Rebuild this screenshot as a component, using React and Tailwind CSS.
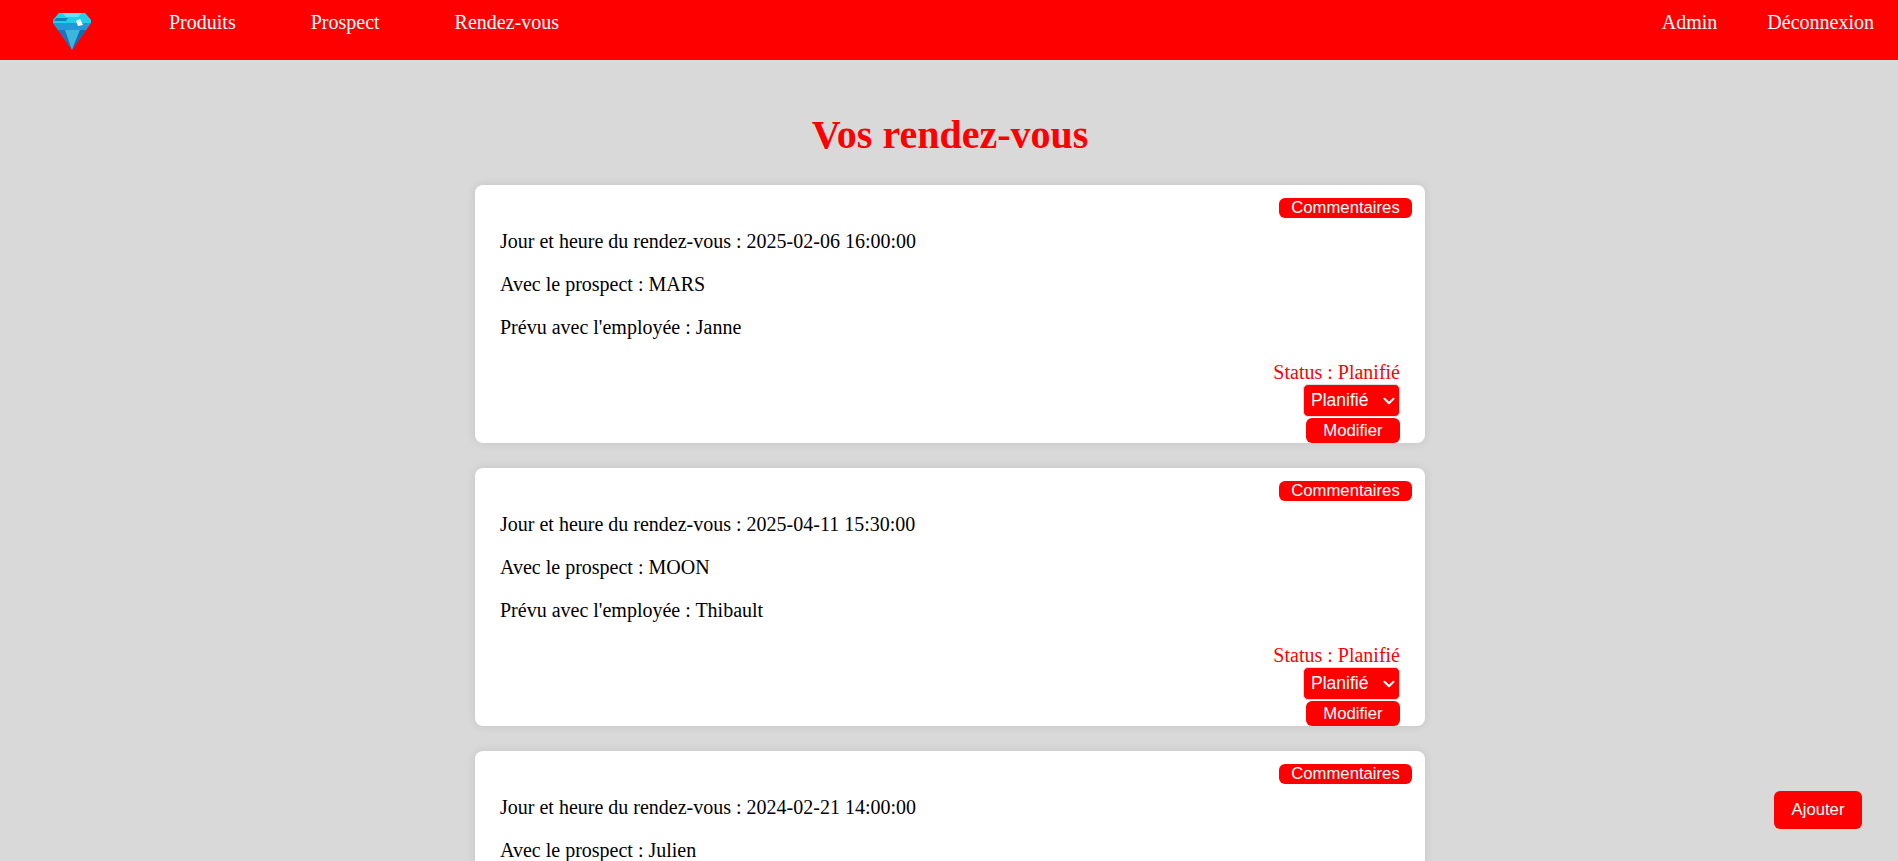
import { ChevronDown } from 'lucide-react'

const rendezVous = [
  { date: '2025-02-06 16:00:00', prospect: 'MARS', employee: 'Janne' },
  { date: '2025-04-11 15:30:00', prospect: 'MOON', employee: 'Thibault' },
  { date: '2024-02-21 14:00:00', prospect: 'Julien', employee: 'Janne' },
]

function Diamond() {
  return (
    <svg width="38" height="38" viewBox="0 0 38 38" className="block">
      <polygon points="6,0 32,0 38,7 38,10 19,37 0,10 0,7" fill="#1f86c8" />
      <polygon points="6,0 32,0 38,7 38,10 0,10 0,7" fill="#22cfe9" />
      <polygon points="3,5 15,5 13,8 1,8" fill="#1a7fb8" />
      <polygon points="9,0 29,0 25,4 13,4" fill="#5fe6f2" />
      <polygon points="0,10 38,10 33,17 5,17" fill="#2298d8" />
      <polygon points="23,8 27,6 30,12 25,13" fill="#ffffff" />
      <polygon points="5,17 12,17 19,37" fill="#2270bb" />
      <polygon points="12,17 27,17 19,37" fill="#3db6dc" />
      <polygon points="27,17 33,17 19,37" fill="#1968b2" />
    </svg>
  )
}

function Header() {
  return (
    <header className="h-[60px] bg-[#ff0000] flex items-start pl-[53px] pr-[24px] text-white text-[20px] leading-[23px]">
      <div className="pt-[13px]">
        <Diamond />
      </div>
      <nav className="flex gap-[75px] ml-[78px] pt-[11px]">
        <a href="#">Produits</a>
        <a href="#">Prospect</a>
        <a href="#">Rendez-vous</a>
      </nav>
      <nav className="flex gap-[50px] ml-auto pt-[11px]">
        <a href="#">Admin</a>
        <a href="#">Déconnexion</a>
      </nav>
    </header>
  )
}

function Card({ item }) {
  return (
    <div className="bg-white rounded-lg shadow-[0_0_10px_rgba(0,0,0,0.1)] h-[258px] shrink-0 flex flex-col">
      <div className="flex justify-end pt-[13px] pr-[13px]">
        <button className="w-[133px] h-[20px] bg-[#ff0000] text-white rounded-md text-[16.7px] leading-[20px] font-['Liberation_Sans',Arial,sans-serif]">
          Commentaires
        </button>
      </div>
      <div className="flex flex-col gap-[20px] mt-[12px] pl-[25px] text-[20px] leading-[23px] text-black">
        <p>Jour et heure du rendez-vous : {item.date}</p>
        <p>Avec le prospect : {item.prospect}</p>
        <p>Prévu avec l'employée : {item.employee}</p>
      </div>
      <div className="flex flex-col items-end mt-[22px] pr-[25px]">
        <p className="text-[20px] leading-[23px] text-[#ff0000]">Status : Planifié</p>
        <div className="relative w-[97px] h-[33px]">
          <select className="appearance-none w-full h-full pl-[7px] bg-[#ff0000] text-white rounded-[5px] border border-[#dddddd] text-[17.5px] font-['Liberation_Sans',Arial,sans-serif]" defaultValue="Planifié">
            <option>Planifié</option>
            <option>Terminé</option>
            <option>Annulé</option>
          </select>
          <ChevronDown size={18} strokeWidth={2.7} className="absolute right-[2.5px] top-[8px] text-white pointer-events-none" />
        </div>
        <button className="w-[94px] h-[25px] mt-[1px] bg-[#ff0000] text-white rounded-md text-[16.7px] leading-[25px] font-['Liberation_Sans',Arial,sans-serif]">
          Modifier
        </button>
      </div>
    </div>
  )
}

export default function App() {
  return (
    <div className="h-screen overflow-hidden bg-[#d9d9d9] font-['Liberation_Serif','Times_New_Roman',serif]">
      <Header />
      <main className="w-[950px] ml-[475px]">
        <h1 className="mt-[52px] mb-[27px] text-center text-[40px] leading-[46px] font-bold text-[#ff0000]">
          Vos rendez-vous
        </h1>
        <div className="flex flex-col gap-[25px]">
          {rendezVous.map((item) => (
            <Card key={item.date} item={item} />
          ))}
        </div>
      </main>
      <button className="fixed right-[36px] bottom-[32px] w-[88px] h-[38px] bg-[#ff0000] text-white rounded-md text-[16.7px] font-['Liberation_Sans',Arial,sans-serif]">
        Ajouter
      </button>
    </div>
  )
}
